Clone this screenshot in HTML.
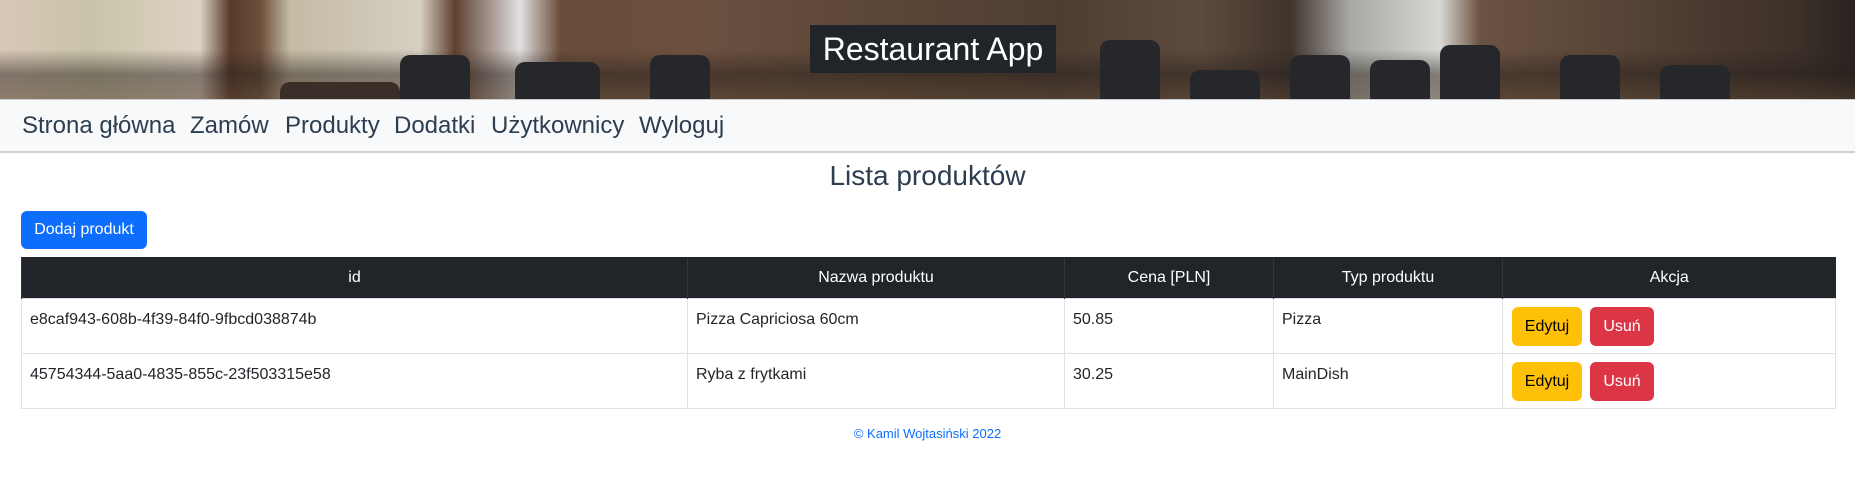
<!DOCTYPE html>
<html><head><meta charset="utf-8"><style>
*{box-sizing:border-box;margin:0;padding:0}
body{width:1855px;height:499px;background:#fff;font-family:"Liberation Sans",Arial,sans-serif;color:#212529;overflow:hidden;position:relative}
.hdr{position:absolute;left:0;top:0;width:1855px;height:99px;overflow:hidden;
background:
linear-gradient(180deg,rgba(0,0,0,0) 0%,rgba(0,0,0,0) 50%,rgba(40,32,28,.5) 75%,rgba(80,62,46,.55) 100%),
linear-gradient(90deg,#d9c7b8 0px,#c8c4a8 90px,#ddd2c4 200px,#5a3a2a 230px,#6b4e3a 260px,#c4bba4 290px,#d6cfc2 420px,#5e4030 455px,#e0e0e0 520px,#6a4d3a 560px,#6b5040 700px,#5a4536 900px,#4e3e32 1060px,#5c4a3c 1200px,#3f332c 1290px,#a8a8a4 1350px,#d8d8d4 1440px,#6b5242 1480px,#5a4638 1600px,#4a3a30 1700px,#3c3029 1800px,#2a2320 1855px);}
.ch{position:absolute;background:#26272a;border-radius:10px 10px 0 0}
.ttl{position:absolute;left:810px;top:25px;width:246px;height:48px;background:#212529;color:#fff;font-size:32px;line-height:48px;text-align:center}
.nav{position:absolute;left:0;top:99px;width:1855px;height:54px;background:#f8f9fa;border-bottom:2px solid #d0d0d0;border-top:1px solid #ccc}
.nav span{position:absolute;top:12px;font-size:24px;color:#2c3e50}
h3{position:absolute;left:0;width:1855px;top:160px;text-align:center;font-size:28px;font-weight:400;color:#2c3e50}
.btn{position:absolute;border-radius:6px;font-size:16px;text-align:center}
.add{left:21px;top:211px;width:126px;height:38px;line-height:38px;background:#0d6efd;color:#fff}
table{position:absolute;left:21px;top:257px;width:1815px;border-collapse:collapse;font-size:16px}
th{background:#212529;color:#fff;font-weight:400;height:41px;border-left:1px solid #32383e;border-top:1px solid #212529}
td{height:55px;vertical-align:top;padding:12px 8px 0 8px;border:1px solid #dee2e6}
.e{background:#ffc107;color:#000;width:70px;height:39px;line-height:39px}
.u{background:#dc3545;color:#fff;width:64px;height:39px;line-height:39px}
.ft{position:absolute;top:426px;left:0;width:1855px;text-align:center;font-size:13px;color:#0d6efd}
</style></head><body>
<div class="hdr">
<div class="ch" style="left:280px;top:82px;width:120px;height:20px;background:#3a2e28"></div>
<div class="ch" style="left:400px;top:55px;width:70px;height:45px"></div>
<div class="ch" style="left:515px;top:62px;width:85px;height:40px"></div>
<div class="ch" style="left:650px;top:55px;width:60px;height:45px"></div>
<div class="ch" style="left:1100px;top:40px;width:60px;height:60px"></div>
<div class="ch" style="left:1190px;top:70px;width:70px;height:30px"></div>
<div class="ch" style="left:1290px;top:55px;width:60px;height:45px"></div>
<div class="ch" style="left:1370px;top:60px;width:60px;height:40px"></div>
<div class="ch" style="left:1440px;top:45px;width:60px;height:55px"></div>
<div class="ch" style="left:1560px;top:55px;width:60px;height:45px"></div>
<div class="ch" style="left:1660px;top:65px;width:70px;height:35px"></div>
</div>
<div class="ttl">Restaurant App</div>
<div class="nav">
<span style="left:22px">Strona główna</span>
<span style="left:190px">Zamów</span>
<span style="left:285px">Produkty</span>
<span style="left:394px">Dodatki</span>
<span style="left:491px">Użytkownicy</span>
<span style="left:639px">Wyloguj</span>
</div>
<h3>Lista produktów</h3>
<div class="btn add">Dodaj produkt</div>
<table>
<tr><th style="width:666px">id</th><th style="width:377px">Nazwa produktu</th><th style="width:209px">Cena [PLN]</th><th style="width:229px">Typ produktu</th><th>Akcja</th></tr>
<tr><td>e8caf943-608b-4f39-84f0-9fbcd038874b</td><td>Pizza Capriciosa 60cm</td><td>50.85</td><td>Pizza</td><td style="position:relative"><div class="btn e" style="left:9px;top:8px">Edytuj</div><div class="btn u" style="left:87px;top:8px">Usuń</div></td></tr>
<tr><td>45754344-5aa0-4835-855c-23f503315e58</td><td>Ryba z frytkami</td><td>30.25</td><td>MainDish</td><td style="position:relative"><div class="btn e" style="left:9px;top:8px">Edytuj</div><div class="btn u" style="left:87px;top:8px">Usuń</div></td></tr>
</table>
<div class="ft">© Kamil Wojtasiński 2022</div>
</body></html>
